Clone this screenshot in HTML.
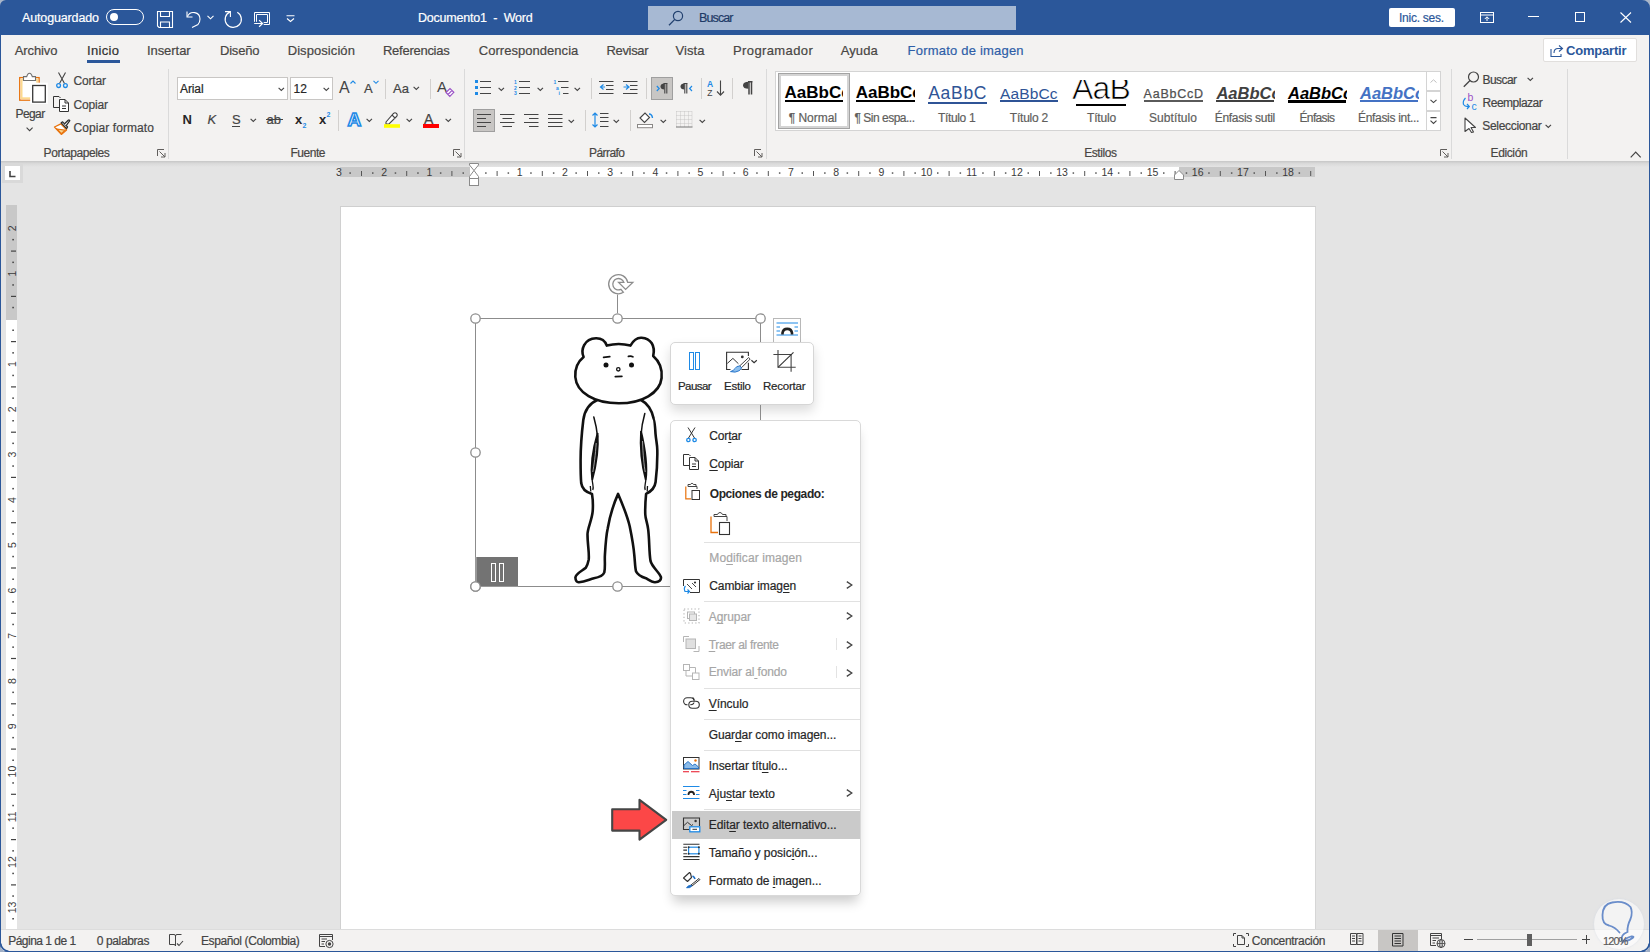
<!DOCTYPE html>
<html><head><meta charset="utf-8"><style>
html,body{margin:0;padding:0;}
body{width:1650px;height:952px;position:relative;overflow:hidden;background:#e4e4e4;font-family:"Liberation Sans",sans-serif;}
.t{position:absolute;white-space:nowrap;line-height:1;-webkit-text-stroke:0.2px currentColor;}
svg{overflow:visible;}
</style></head><body>
<div style="position:absolute;left:0px;top:0px;width:1650px;height:35px;background:#2b579a;"></div>
<div style="position:absolute;left:0px;top:35px;width:1650px;height:126px;background:#f3f2f1;"></div>
<div style="position:absolute;left:0px;top:161px;width:1650px;height:6px;background:linear-gradient(#c6c6c6,#d9d9d9 40%,#e4e4e4);"></div>
<div style="position:absolute;left:0px;top:0px;width:1px;height:952px;background:#2b579a;"></div>
<div style="position:absolute;left:1649px;top:0px;width:1px;height:952px;background:#2b579a;"></div>
<div style="position:absolute;left:0px;top:951px;width:1650px;height:1px;background:#2b579a;"></div>
<div style="position:absolute;left:1px;top:929px;width:1648px;height:22px;background:#f3f2f1;border-top:1px solid #dcdcdc;box-sizing:border-box;"></div>
<div style="position:absolute;left:340px;top:206px;width:976px;height:723px;background:#fff;border-left:1px solid #d0d0d0;border-top:1px solid #cfcfcf;border-right:1px solid #d6d6d6;box-sizing:border-box;"></div>
<div class="t" style="left:22.00px;top:12.00px;font-size:12.5px;color:#ffffff;letter-spacing:-0.140px;">Autoguardado</div>
<div style="position:absolute;left:106px;top:9px;width:38px;height:16px;border:1.3px solid #fff;border-radius:8px;box-sizing:border-box;"></div>
<div style="position:absolute;left:110px;top:13px;width:8px;height:8px;background:#fff;border-radius:50%;"></div>
<svg style="position:absolute;left:157px;top:11px;" width="17" height="17" viewBox="0 0 17 17"><path d="M0.5 0.5H15.5V16.5H2L0.5 15Z M3.5 0.5V5.5H12.5V0.5 M3.5 16.5V11H12.5V16.5" fill="none" stroke="#fff" stroke-width="1.1"/></svg>
<svg style="position:absolute;left:186px;top:10px;" width="16" height="18" viewBox="0 0 16 18"><path d="M1.5 6.5 A6.5 6.5 0 0 1 14 9 Q14 12 12 14.5 L6 17.5" fill="none" stroke="#fff" stroke-width="1.1"/><path d="M1 1.5V7H6.5" fill="none" stroke="#fff" stroke-width="1.1"/></svg>
<svg style="position:absolute;left:207px;top:15px;" width="7" height="5" viewBox="0 0 7 5"><path d="M0.5 0.8L3.5 3.8L6.5 0.8" fill="none" stroke="#fff" stroke-width="1.1"/></svg>
<svg style="position:absolute;left:224px;top:10px;" width="20" height="20" viewBox="0 0 20 20"><path d="M13.3 2.3A8.1 8.1 0 1 1 6 1.9" fill="none" stroke="#fff" stroke-width="1.2"/><path d="M1 1.6H6.4V7" fill="none" stroke="#fff" stroke-width="1.1"/></svg>
<svg style="position:absolute;left:253px;top:11px;" width="19" height="18" viewBox="0 0 19 18"><path d="M1.5 10.8V1.5H16.5V13.5H10.7 M3.5 10.8V3.5H14.5V11.5H10.7" fill="none" stroke="#fff" stroke-width="1"/><path d="M1.2 12.5H9.4 M6.1 9.1L9.6 12.5L6.1 15.8" fill="none" stroke="#fff" stroke-width="1.2"/></svg>
<svg style="position:absolute;left:286px;top:15px;" width="9" height="7" viewBox="0 0 9 7"><path d="M0.5 0.8H8.5 M1 3.5L4.5 6.5L8 3.5" fill="none" stroke="#fff" stroke-width="1.1"/></svg>
<div class="t" style="left:418.00px;top:12.00px;font-size:12.5px;color:#ffffff;letter-spacing:-0.220px;">Documento1  -  Word</div>
<div style="position:absolute;left:648px;top:6px;width:368px;height:24px;background:#a7b9d3;"></div>
<svg style="position:absolute;left:668px;top:10px;" width="16" height="16" viewBox="0 0 16 16"><circle cx="10" cy="6" r="4.6" fill="none" stroke="#22416f" stroke-width="1.2"/><path d="M6.8 9.4L1 15.2" stroke="#22416f" stroke-width="1.3"/></svg>
<div class="t" style="left:699.00px;top:12.00px;font-size:12.5px;color:#1e3a66;letter-spacing:-0.881px;">Buscar</div>
<div style="position:absolute;left:1389px;top:8px;width:66px;height:19px;background:#fff;border-radius:2px;"></div>
<div class="t" style="left:1399.00px;top:12.00px;font-size:12px;color:#2b579a;letter-spacing:-0.261px;">Inic. ses.</div>
<svg style="position:absolute;left:1480px;top:12px;" width="15" height="11" viewBox="0 0 15 11"><rect x="0.5" y="0.5" width="13" height="10" fill="none" stroke="#fff" stroke-width="1"/><path d="M0.5 3H13.5 M7 9V5 M4.8 7L7 4.8L9.2 7" fill="none" stroke="#fff" stroke-width="1"/></svg>
<div style="position:absolute;left:1528px;top:16px;width:11px;height:1px;background:#fff;"></div>
<div style="position:absolute;left:1575px;top:12px;width:10px;height:10px;border:1px solid #fff;box-sizing:border-box;"></div>
<svg style="position:absolute;left:1620px;top:12px;" width="12" height="11" viewBox="0 0 12 11"><path d="M0.5 0.5L11 10.5M11 0.5L0.5 10.5" stroke="#fff" stroke-width="1.1"/></svg>
<div class="t" style="left:14.80px;top:44.00px;font-size:13px;color:#484644;letter-spacing:-0.125px;">Archivo</div>
<div class="t" style="left:87.00px;top:44.00px;font-size:13px;color:#303030;letter-spacing:0.330px;">Inicio</div>
<div class="t" style="left:146.90px;top:44.00px;font-size:13px;color:#484644;letter-spacing:-0.039px;">Insertar</div>
<div class="t" style="left:220.00px;top:44.00px;font-size:13px;color:#484644;letter-spacing:-0.213px;">Diseño</div>
<div class="t" style="left:287.70px;top:44.00px;font-size:13px;color:#484644;letter-spacing:0.073px;">Disposición</div>
<div class="t" style="left:383.00px;top:44.00px;font-size:13px;color:#484644;letter-spacing:-0.267px;">Referencias</div>
<div class="t" style="left:478.80px;top:44.00px;font-size:13px;color:#484644;letter-spacing:0.036px;">Correspondencia</div>
<div class="t" style="left:606.40px;top:44.00px;font-size:13px;color:#484644;letter-spacing:-0.311px;">Revisar</div>
<div class="t" style="left:675.60px;top:44.00px;font-size:13px;color:#484644;letter-spacing:0.034px;">Vista</div>
<div class="t" style="left:733.00px;top:44.00px;font-size:13px;color:#484644;letter-spacing:0.384px;">Programador</div>
<div class="t" style="left:840.80px;top:44.00px;font-size:13px;color:#484644;letter-spacing:0.069px;">Ayuda</div>
<div class="t" style="left:907.60px;top:44.00px;font-size:13px;color:#2f5ea8;letter-spacing:0.205px;">Formato de imagen</div>
<div style="position:absolute;left:87px;top:60px;width:33px;height:3px;background:#2b579a;"></div>
<div style="position:absolute;left:1543px;top:38px;width:94px;height:24px;background:#fff;border:1px solid #e1dfdd;border-radius:2px;box-sizing:border-box;"></div>
<svg style="position:absolute;left:1550px;top:44px;" width="14" height="13" viewBox="0 0 14 13"><path d="M9 1.5L12.5 4.5L9 7.5 M12.5 4.5H8Q4 4.5 4 9 M1 5V12.5H11V10" fill="none" stroke="#2b579a" stroke-width="1.1"/></svg>
<div class="t" style="left:1566.00px;top:44.00px;font-size:13px;color:#2b579a;font-weight:700;-webkit-text-stroke:0;letter-spacing:-0.202px;">Compartir</div>
<div style="position:absolute;left:168px;top:69px;width:1px;height:90px;background:#dadada;"></div>
<div style="position:absolute;left:464px;top:69px;width:1px;height:90px;background:#dadada;"></div>
<div style="position:absolute;left:766px;top:69px;width:1px;height:90px;background:#dadada;"></div>
<div style="position:absolute;left:1451px;top:69px;width:1px;height:90px;background:#dadada;"></div>
<div style="position:absolute;left:1567px;top:69px;width:1px;height:90px;background:#dadada;"></div>
<svg style="position:absolute;left:157px;top:149px;" width="9" height="9" viewBox="0 0 9 9"><path d="M0.5 7V0.5H7 M2.5 2.5L8 8 M8 4V8H4" fill="none" stroke="#605e5c" stroke-width="1"/></svg>
<svg style="position:absolute;left:453px;top:149px;" width="9" height="9" viewBox="0 0 9 9"><path d="M0.5 7V0.5H7 M2.5 2.5L8 8 M8 4V8H4" fill="none" stroke="#605e5c" stroke-width="1"/></svg>
<svg style="position:absolute;left:754px;top:149px;" width="9" height="9" viewBox="0 0 9 9"><path d="M0.5 7V0.5H7 M2.5 2.5L8 8 M8 4V8H4" fill="none" stroke="#605e5c" stroke-width="1"/></svg>
<svg style="position:absolute;left:1440px;top:149px;" width="9" height="9" viewBox="0 0 9 9"><path d="M0.5 7V0.5H7 M2.5 2.5L8 8 M8 4V8H4" fill="none" stroke="#605e5c" stroke-width="1"/></svg>
<div class="t" style="left:43.60px;top:147.00px;font-size:12px;color:#484644;letter-spacing:-0.411px;">Portapapeles</div>
<div class="t" style="left:290.40px;top:147.00px;font-size:12px;color:#484644;letter-spacing:-0.452px;">Fuente</div>
<div class="t" style="left:589.00px;top:147.00px;font-size:12px;color:#484644;letter-spacing:-0.559px;">Párrafo</div>
<div class="t" style="left:1084.20px;top:147.00px;font-size:12px;color:#484644;letter-spacing:-0.424px;">Estilos</div>
<div class="t" style="left:1490.60px;top:147.00px;font-size:12px;color:#484644;letter-spacing:-0.393px;">Edición</div>
<svg style="position:absolute;left:1630px;top:151px;" width="12" height="7" viewBox="0 0 12 7"><path d="M0.7 6.3L5.7 1L10.7 6.3" fill="none" stroke="#444" stroke-width="1.2"/></svg>
<svg style="position:absolute;left:12px;top:68px;" width="40" height="40" viewBox="0 0 40 40"><rect x="7.7" y="9.6" width="19.4" height="22.6" fill="#fff" stroke="#e8720c" stroke-width="1.3"/>
<path d="M9.6 31V11.6H25.2V20" fill="none" stroke="#fcd98f" stroke-width="1.8"/><path d="M9.6 30.2H21" stroke="#fcd98f" stroke-width="1.8"/>
<path d="M11.5 12.5V8.6H14.7Q15.6 5.2 17.5 5.2Q19.4 5.2 20.3 8.6H23.5V12.5Z" fill="#fff" stroke="#707070" stroke-width="1.1"/>
<rect x="19.7" y="16.2" width="14.6" height="18.2" fill="#fff" stroke="#fff" stroke-width="3"/>
<rect x="20.7" y="17.5" width="12.6" height="16.6" fill="#fff" stroke="#383838" stroke-width="1.3"/></svg>
<div class="t" style="left:15.50px;top:108.00px;font-size:12px;color:#444444;letter-spacing:-0.581px;">Pegar</div>
<svg style="position:absolute;left:26px;top:127px;" width="8" height="5" viewBox="0 0 8 5"><path d="M0.6 0.6L3.6 3.6L6.6 0.6" fill="none" stroke="#444" stroke-width="1.1"/></svg>
<svg style="position:absolute;left:56px;top:72px;" width="12" height="17" viewBox="0 0 12 17"><path d="M2.5 0.5L8.5 11.5 M9.5 0.5L3.5 11.5" stroke="#444" stroke-width="1.1" fill="none"/>
<circle cx="2.6" cy="13.6" r="1.9" fill="none" stroke="#1e8ae6" stroke-width="1.3"/><circle cx="9.4" cy="13.6" r="1.9" fill="none" stroke="#1e8ae6" stroke-width="1.3"/></svg>
<div class="t" style="left:73.50px;top:75.00px;font-size:12px;color:#444444;letter-spacing:-0.188px;">Cortar</div>
<svg style="position:absolute;left:53px;top:96px;" width="17" height="16" viewBox="0 0 17 16"><path d="M6.5 11.5H0.5V0.5H6L7.5 2" fill="none" stroke="#333" stroke-width="1"/>
<path d="M6.5 3.5H12L15.5 7V15.5H6.5Z M12 3.5V7H15.5 M9 10H13 M9 12.5H13" fill="#fff" stroke="#333" stroke-width="1"/></svg>
<div class="t" style="left:73.50px;top:99.00px;font-size:12px;color:#444444;letter-spacing:-0.170px;">Copiar</div>
<svg style="position:absolute;left:50px;top:116px;" width="24" height="22" viewBox="0 0 24 22"><path d="M4.5,11 L10.8,7.9 L16.6,13.9 L11.3,18.4 Z" fill="#fff" stroke="#e8720c" stroke-width="1.3" stroke-linejoin="round"/>
<path d="M7,13 L15.2,14.2 L11.3,17.6 Z" fill="#f6d38f" stroke="#e8720c" stroke-width="1.1"/>
<path d="M11.2,6.8 L12.6,5.8 L17.6,11 L16.6,12.6 Z" fill="#fff" stroke="#2b2b2b" stroke-width="1.2" stroke-linejoin="round"/>
<path d="M14.3,8 L18.2,4.2 Q19.3,3.6 19.8,4.6 L16.2,9.6" fill="#fff" stroke="#2b2b2b" stroke-width="1.2" stroke-linejoin="round"/></svg>
<div class="t" style="left:73.50px;top:122.00px;font-size:12px;color:#444444;letter-spacing:0.079px;">Copiar formato</div>
<div style="position:absolute;left:177px;top:77px;width:111px;height:23px;background:#fff;border:1px solid #c8c6c4;box-sizing:border-box;"></div>
<div class="t" style="left:180.00px;top:83.00px;font-size:12px;color:#262626;letter-spacing:-0.102px;">Arial</div>
<svg style="position:absolute;left:278px;top:87px;" width="7" height="5" viewBox="0 0 7 5"><path d="M0.6 0.8L3.3 3.5L6 0.8" fill="none" stroke="#444" stroke-width="1.1"/></svg>
<div style="position:absolute;left:290px;top:77px;width:43px;height:23px;background:#fff;border:1px solid #c8c6c4;box-sizing:border-box;"></div>
<div class="t" style="left:293.60px;top:83.00px;font-size:12px;color:#262626;">12</div>
<svg style="position:absolute;left:323px;top:87px;" width="7" height="5" viewBox="0 0 7 5"><path d="M0.6 0.8L3.3 3.5L6 0.8" fill="none" stroke="#444" stroke-width="1.1"/></svg>
<div class="t" style="left:339.00px;top:80.00px;font-size:16px;color:#444;-webkit-text-stroke:0;">A</div>
<svg style="position:absolute;left:350px;top:80px;" width="6" height="4" viewBox="0 0 6 4"><path d="M0.5 3.5L3 1L5.5 3.5" fill="none" stroke="#1e8ae6" stroke-width="1.1"/></svg>
<div class="t" style="left:364.00px;top:82.00px;font-size:13px;color:#444;">A</div>
<svg style="position:absolute;left:373px;top:80px;" width="6" height="4" viewBox="0 0 6 4"><path d="M0.5 0.8L3 3.3L5.5 0.8" fill="none" stroke="#1e8ae6" stroke-width="1.1"/></svg>
<div style="position:absolute;left:385px;top:79px;width:1px;height:20px;background:#d2d0ce;"></div>
<div class="t" style="left:393.00px;top:82.00px;font-size:13px;color:#444;letter-spacing:0.099px;">Aa</div>
<svg style="position:absolute;left:413px;top:86px;" width="7" height="5" viewBox="0 0 7 5"><path d="M0.6 0.8L3.3 3.5L6 0.8" fill="none" stroke="#444" stroke-width="1.1"/></svg>
<div style="position:absolute;left:430px;top:79px;width:1px;height:20px;background:#d2d0ce;"></div>
<div class="t" style="left:437.00px;top:79.00px;font-size:15px;color:#444;-webkit-text-stroke:0;">A</div>
<svg style="position:absolute;left:445px;top:87px;" width="10" height="10" viewBox="0 0 10 10"><path d="M1 5.5L5 1.5L8.8 5.3L4.8 9.3Z M3 7.5L6.8 3.7" fill="#fff" stroke="#9a52c6" stroke-width="1.2"/></svg>
<div class="t" style="left:182.40px;top:113.00px;font-size:13px;color:#262626;font-weight:700;-webkit-text-stroke:0;">N</div>
<div class="t" style="left:207.50px;top:113.00px;font-size:13px;color:#444;font-style:italic;">K</div>
<div class="t" style="left:232.00px;top:113.00px;font-size:13px;color:#444;">S</div>
<div style="position:absolute;left:232px;top:126px;width:8px;height:1px;background:#444;"></div>
<svg style="position:absolute;left:250px;top:118px;" width="7" height="5" viewBox="0 0 7 5"><path d="M0.6 0.8L3.3 3.5L6 0.8" fill="none" stroke="#444" stroke-width="1.1"/></svg>
<div class="t" style="left:266.50px;top:113.00px;font-size:13px;color:#444;">ab</div>
<div style="position:absolute;left:266px;top:119px;width:17px;height:1px;background:#444;"></div>
<div class="t" style="left:295.00px;top:113.00px;font-size:13px;color:#262626;font-weight:700;-webkit-text-stroke:0;">x</div>
<div class="t" style="left:302.50px;top:122.00px;font-size:7px;color:#1e8ae6;font-weight:700;-webkit-text-stroke:0;">2</div>
<div class="t" style="left:319.00px;top:113.00px;font-size:13px;color:#262626;font-weight:700;-webkit-text-stroke:0;">x</div>
<div class="t" style="left:326.50px;top:111.00px;font-size:7px;color:#1e8ae6;font-weight:700;-webkit-text-stroke:0;">2</div>
<div style="position:absolute;left:338px;top:110px;width:1px;height:21px;background:#d2d0ce;"></div>
<svg style="position:absolute;left:346.5px;top:110px;" width="18" height="17" viewBox="0 0 18 17"><text x="0.5" y="15.5" font-family="Liberation Sans" font-weight="700" font-size="19" fill="#fff" stroke="#1e8ae6" stroke-width="1.6">A</text></svg>
<svg style="position:absolute;left:366px;top:118px;" width="7" height="5" viewBox="0 0 7 5"><path d="M0.6 0.8L3.3 3.5L6 0.8" fill="none" stroke="#444" stroke-width="1.1"/></svg>
<svg style="position:absolute;left:383px;top:111px;" width="18" height="18" viewBox="0 0 18 18"><path d="M3 11L10.5 2.5Q12 1 13.5 2.5Q15 4 13.5 5.5L6 13L3 13Z M9 4L12 7" fill="#fff" stroke="#444" stroke-width="1.1"/><rect x="1" y="13.2" width="16" height="3.6" fill="#ffff00"/></svg>
<svg style="position:absolute;left:406px;top:118px;" width="7" height="5" viewBox="0 0 7 5"><path d="M0.6 0.8L3.3 3.5L6 0.8" fill="none" stroke="#444" stroke-width="1.1"/></svg>
<div class="t" style="left:424.00px;top:112.00px;font-size:14px;color:#444;">A</div>
<div style="position:absolute;left:423px;top:124px;width:16px;height:4px;background:#ff0000;"></div>
<svg style="position:absolute;left:445px;top:118px;" width="7" height="5" viewBox="0 0 7 5"><path d="M0.6 0.8L3.3 3.5L6 0.8" fill="none" stroke="#444" stroke-width="1.1"/></svg>
<svg style="position:absolute;left:475px;top:80px;" width="17" height="15" viewBox="0 0 17 15"><rect x="0" y="0" width="3" height="3" fill="#1e8ae6"/><rect x="0" y="6" width="3" height="3" fill="#1e8ae6"/><rect x="0" y="12" width="3" height="3" fill="#1e8ae6"/><path d="M5 1.5H16 M5 7.5H16 M5 13.5H16" stroke="#444" stroke-width="1.1"/></svg>
<svg style="position:absolute;left:498px;top:87px;" width="7" height="5" viewBox="0 0 7 5"><path d="M0.6 0.8L3.3 3.5L6 0.8" fill="none" stroke="#444" stroke-width="1.1"/></svg>
<svg style="position:absolute;left:514px;top:80px;" width="17" height="16" viewBox="0 0 17 16"><text x="0" y="4" font-size="5" font-family="Liberation Sans" font-weight="700" fill="#1e8ae6">1</text><text x="0" y="9.5" font-size="5" font-family="Liberation Sans" font-weight="700" fill="#1e8ae6">2</text><text x="0" y="15" font-size="5" font-family="Liberation Sans" font-weight="700" fill="#1e8ae6">3</text><path d="M5 1.5H16 M5 7.5H16 M5 13.5H16" stroke="#444" stroke-width="1.1"/></svg>
<svg style="position:absolute;left:537px;top:87px;" width="7" height="5" viewBox="0 0 7 5"><path d="M0.6 0.8L3.3 3.5L6 0.8" fill="none" stroke="#444" stroke-width="1.1"/></svg>
<svg style="position:absolute;left:553px;top:80px;" width="17" height="16" viewBox="0 0 17 16"><text x="0.5" y="4" font-size="5" font-family="Liberation Sans" font-weight="700" fill="#1e8ae6">1</text><text x="3" y="9.5" font-size="5" font-family="Liberation Sans" font-weight="700" fill="#1e8ae6">a</text><text x="5.5" y="15" font-size="5" font-family="Liberation Sans" font-weight="700" fill="#1e8ae6">i</text><path d="M5 1.5H15.5 M8 7.5H15.5 M10 13.5H15.5" stroke="#444" stroke-width="1.1"/></svg>
<svg style="position:absolute;left:574px;top:87px;" width="7" height="5" viewBox="0 0 7 5"><path d="M0.6 0.8L3.3 3.5L6 0.8" fill="none" stroke="#444" stroke-width="1.1"/></svg>
<div style="position:absolute;left:591px;top:78px;width:1px;height:21px;background:#d2d0ce;"></div>
<svg style="position:absolute;left:599px;top:80px;" width="15" height="15" viewBox="0 0 15 15"><path d="M0 1.5H14.5 M7 5.5H14.5 M7 9.5H14.5 M0 13.5H14.5" stroke="#444" stroke-width="1.1"/><path d="M4.5 4.5L1.5 7L4.5 9.5 M1.5 7H6" fill="none" stroke="#1e8ae6" stroke-width="1.2"/></svg>
<svg style="position:absolute;left:623px;top:80px;" width="15" height="15" viewBox="0 0 15 15"><path d="M0 1.5H14.5 M7 5.5H14.5 M7 9.5H14.5 M0 13.5H14.5" stroke="#444" stroke-width="1.1"/><path d="M3 4.5L6 7L3 9.5 M0.5 7H6" fill="none" stroke="#1e8ae6" stroke-width="1.2"/></svg>
<div style="position:absolute;left:646px;top:78px;width:1px;height:21px;background:#d2d0ce;"></div>
<div style="position:absolute;left:651px;top:77px;width:22px;height:23px;background:#c8c6c4;border:1px solid #9f9f9f;box-sizing:border-box;"></div>
<svg style="position:absolute;left:656px;top:83px;" width="12" height="11" viewBox="0 0 12 11"><path d="M0.8 3L3.2 5.5L0.8 8" fill="none" stroke="#1e8ae6" stroke-width="1.2"/><path d="M7.5 0.5H11.5 M8.8 0.5V10.5 M10.8 0.5V10.5" stroke="#444" stroke-width="1.1"/><path d="M8.5 0.5Q4.5 0.5 4.5 3.5Q4.5 6.5 8.5 6.5Z" fill="#444"/></svg>
<svg style="position:absolute;left:679px;top:83px;" width="14" height="11" viewBox="0 0 14 11"><path d="M4.5 0.5H8.5 M5.8 0.5V10.5 M7.8 0.5V10.5" stroke="#444" stroke-width="1.1"/><path d="M5.5 0.5Q1.5 0.5 1.5 3.5Q1.5 6.5 5.5 6.5Z" fill="#444"/><path d="M13 3L10.6 5.5L13 8" fill="none" stroke="#1e8ae6" stroke-width="1.2"/></svg>
<div style="position:absolute;left:701px;top:78px;width:1px;height:21px;background:#d2d0ce;"></div>
<svg style="position:absolute;left:707px;top:80px;" width="19" height="17" viewBox="0 0 19 17"><text x="0" y="7.3" font-size="8.5" font-family="Liberation Sans" font-weight="700" fill="#1e8ae6">A</text><text x="0.3" y="16" font-size="8.5" font-family="Liberation Sans" fill="#444">Z</text><path d="M13.5 0.5V15 M10 11.5L13.5 15.2L17 11.5" fill="none" stroke="#444" stroke-width="1.1"/></svg>
<div style="position:absolute;left:732px;top:78px;width:1px;height:21px;background:#d2d0ce;"></div>
<svg style="position:absolute;left:742px;top:81px;" width="11" height="14" viewBox="0 0 11 14"><path d="M6 0.8H10.5 M7 0.8V13.5 M9.5 0.8V13.5" stroke="#444" stroke-width="1.5"/><path d="M6.5 0.8Q1 0.8 1 4.3Q1 7.8 6.5 7.8Z" fill="#444"/></svg>
<div style="position:absolute;left:473px;top:109px;width:22px;height:23px;background:#c8c6c4;border:1px solid #9f9f9f;box-sizing:border-box;"></div>
<svg style="position:absolute;left:477px;top:114px;" width="15" height="14" viewBox="0 0 15 14"><path d="M0 0.5H14 M0 4.5H9 M0 8.5H14 M0 12.5H9" stroke="#444" stroke-width="1.1"/></svg>
<svg style="position:absolute;left:500px;top:114px;" width="15" height="14" viewBox="0 0 15 14"><path d="M0 0.5H14.5 M2.5 4.5H12 M0 8.5H14.5 M2.5 12.5H12" stroke="#444" stroke-width="1.1"/></svg>
<svg style="position:absolute;left:524px;top:114px;" width="15" height="14" viewBox="0 0 15 14"><path d="M0 0.5H14.5 M5 4.5H14.5 M0 8.5H14.5 M5 12.5H14.5" stroke="#444" stroke-width="1.1"/></svg>
<svg style="position:absolute;left:548px;top:114px;" width="15" height="14" viewBox="0 0 15 14"><path d="M0 0.5H14.5 M0 4.5H14.5 M0 8.5H14.5 M0 12.5H14.5" stroke="#444" stroke-width="1.1"/></svg>
<svg style="position:absolute;left:568px;top:119px;" width="7" height="5" viewBox="0 0 7 5"><path d="M0.6 0.8L3.3 3.5L6 0.8" fill="none" stroke="#444" stroke-width="1.1"/></svg>
<div style="position:absolute;left:585px;top:110px;width:1px;height:21px;background:#d2d0ce;"></div>
<svg style="position:absolute;left:592px;top:112px;" width="17" height="16" viewBox="0 0 17 16"><path d="M3 1V15 M0.5 3.5L3 1L5.5 3.5 M0.5 12.5L3 15L5.5 12.5" fill="none" stroke="#1e8ae6" stroke-width="1.2"/><path d="M8 1.5H16.5 M8 5.5H16.5 M8 9.5H16.5 M8 14.5H16.5" stroke="#444" stroke-width="1.1"/></svg>
<svg style="position:absolute;left:613px;top:119px;" width="7" height="5" viewBox="0 0 7 5"><path d="M0.6 0.8L3.3 3.5L6 0.8" fill="none" stroke="#444" stroke-width="1.1"/></svg>
<div style="position:absolute;left:630px;top:110px;width:1px;height:21px;background:#d2d0ce;"></div>
<svg style="position:absolute;left:637px;top:111px;" width="18" height="18" viewBox="0 0 18 18"><path d="M3 7L8 2L12.5 6.5L7.5 11.5Z" fill="#fff" stroke="#444" stroke-width="1.1"/><path d="M12 3Q15 3 15.5 7" fill="none" stroke="#1e8ae6" stroke-width="1.4"/><rect x="0.5" y="13.5" width="15" height="3.2" fill="#fff" stroke="#8a8886" stroke-width="1"/></svg>
<svg style="position:absolute;left:660px;top:119px;" width="7" height="5" viewBox="0 0 7 5"><path d="M0.6 0.8L3.3 3.5L6 0.8" fill="none" stroke="#444" stroke-width="1.1"/></svg>
<svg style="position:absolute;left:676px;top:111px;" width="17" height="17" viewBox="0 0 17 17"><path d="M0.5 0.5H16 M0.5 4.5H16 M0.5 8.5H16 M0.5 12.5H16 M0.5 0.5V16 M4.5 0.5V16 M8.5 0.5V16 M12.5 0.5V16 M16 0.5V16" fill="none" stroke="#bdbdbd" stroke-width="0.8" stroke-dasharray="1 1"/><path d="M0 16H16.5" stroke="#777" stroke-width="1"/></svg>
<svg style="position:absolute;left:699px;top:119px;" width="7" height="5" viewBox="0 0 7 5"><path d="M0.6 0.8L3.3 3.5L6 0.8" fill="none" stroke="#444" stroke-width="1.1"/></svg>
<div style="position:absolute;left:775px;top:71px;width:652px;height:60px;background:#fff;border:1px solid #d4d4d4;box-sizing:border-box;"></div>
<div style="position:absolute;left:778px;top:73px;width:72px;height:56px;border:1px solid #a3a3a3;box-sizing:border-box;"></div>
<div style="position:absolute;left:779px;top:74px;width:70px;height:54px;border:2.5px solid #d4d4d4;box-sizing:border-box;"></div>
<div style="position:absolute;left:784px;top:78px;width:59px;height:26px;overflow:hidden;">
<div class="t" style="left:0.60px;top:6.00px;font-size:17px;color:#000;font-weight:700;-webkit-text-stroke:0;">AaBbCc</div>
</div>
<div style="position:absolute;left:785px;top:100px;width:58px;height:2.4px;background:#000;"></div>
<div class="t" style="left:788.70px;top:112.00px;font-size:12px;color:#605e5c;letter-spacing:-0.022px;">¶ Normal</div>
<div style="position:absolute;left:855px;top:78px;width:60px;height:26px;overflow:hidden;">
<div class="t" style="left:0.70px;top:6.00px;font-size:17px;color:#000;font-weight:700;-webkit-text-stroke:0;">AaBbCc</div>
</div>
<div style="position:absolute;left:856px;top:100px;width:59px;height:2.4px;background:#000;"></div>
<div class="t" style="left:854.60px;top:112.00px;font-size:12px;color:#605e5c;letter-spacing:-0.507px;">¶ Sin espa...</div>
<div class="t" style="left:928.20px;top:85.00px;font-size:17.5px;color:#2f5496;-webkit-text-stroke:0;letter-spacing:0.713px;">AaBbC</div>
<div style="position:absolute;left:928px;top:101.5px;width:59px;height:2px;background:#2f5496;"></div>
<div class="t" style="left:938.00px;top:112.00px;font-size:12px;color:#605e5c;letter-spacing:-0.346px;">Título 1</div>
<div class="t" style="left:1000.00px;top:86.00px;font-size:15.5px;color:#2f5496;-webkit-text-stroke:0;letter-spacing:0.148px;">AaBbCc</div>
<div style="position:absolute;left:1000px;top:100.4px;width:58px;height:2px;background:#2f5496;"></div>
<div class="t" style="left:1009.80px;top:112.00px;font-size:12px;color:#605e5c;letter-spacing:-0.218px;">Título 2</div>
<div style="position:absolute;left:1070px;top:80px;width:64px;height:24px;overflow:hidden;">
<div class="t" style="left:2.00px;top:-8.00px;font-size:32px;color:#000;-webkit-text-stroke:0;letter-spacing:-0.8px;-webkit-text-stroke:0.7px #fff;">AaB</div>
</div>
<div style="position:absolute;left:1076.3px;top:104px;width:50px;height:2px;background:#000;"></div>
<div class="t" style="left:1087.00px;top:112.00px;font-size:12px;color:#605e5c;letter-spacing:-0.163px;">Título</div>
<div class="t" style="left:1143.60px;top:88.00px;font-size:12.5px;color:#505050;letter-spacing:0.753px;-webkit-text-stroke:0.25px #505050;">AaBbCcD</div>
<div style="position:absolute;left:1143.6px;top:100px;width:59.5px;height:1.8px;background:#5a5a5a;"></div>
<div class="t" style="left:1149.00px;top:112.00px;font-size:12px;color:#605e5c;letter-spacing:0.079px;">Subtítulo</div>
<div style="position:absolute;left:1214px;top:82px;width:61px;height:22px;overflow:hidden;">
<div class="t" style="left:2.40px;top:3.00px;font-size:16.5px;color:#404040;font-weight:700;-webkit-text-stroke:0;font-style:italic;">AaBbCc</div>
</div>
<div style="position:absolute;left:1216.4px;top:100.4px;width:58px;height:2px;background:#404040;"></div>
<div class="t" style="left:1214.70px;top:112.00px;font-size:12px;color:#605e5c;letter-spacing:-0.286px;">Énfasis sutil</div>
<div style="position:absolute;left:1286px;top:82px;width:61px;height:22px;overflow:hidden;">
<div class="t" style="left:2.00px;top:3.00px;font-size:16.5px;color:#000;font-weight:700;-webkit-text-stroke:0;font-style:italic;">AaBbCc</div>
</div>
<div style="position:absolute;left:1288px;top:100.4px;width:58px;height:2.2px;background:#000;"></div>
<div class="t" style="left:1299.50px;top:112.00px;font-size:12px;color:#605e5c;letter-spacing:-0.642px;">Énfasis</div>
<div style="position:absolute;left:1358px;top:82px;width:61px;height:22px;overflow:hidden;">
<div class="t" style="left:2.00px;top:3.00px;font-size:16.5px;color:#4472c4;font-weight:700;-webkit-text-stroke:0;font-style:italic;">AaBbCc</div>
</div>
<div style="position:absolute;left:1360px;top:100.4px;width:58px;height:2px;background:#4472c4;"></div>
<div class="t" style="left:1358.00px;top:112.00px;font-size:12px;color:#605e5c;letter-spacing:-0.313px;">Énfasis int...</div>
<div style="position:absolute;left:1426px;top:71px;width:15px;height:20px;background:#fff;border:1px solid #d4d4d4;box-sizing:border-box;"></div>
<div style="position:absolute;left:1426px;top:91px;width:15px;height:20px;background:#fff;border:1px solid #d4d4d4;box-sizing:border-box;"></div>
<div style="position:absolute;left:1426px;top:111px;width:15px;height:20px;background:#fff;border:1px solid #d4d4d4;box-sizing:border-box;"></div>
<svg style="position:absolute;left:1430px;top:79px;" width="7" height="4" viewBox="0 0 7 4"><path d="M0.5 3.5L3.5 0.8L6.5 3.5" fill="none" stroke="#c0c0c0" stroke-width="1"/></svg>
<svg style="position:absolute;left:1430px;top:99px;" width="7" height="5" viewBox="0 0 7 5"><path d="M0.5 0.8L3.5 3.6L6.5 0.8" fill="none" stroke="#444" stroke-width="1.1"/></svg>
<svg style="position:absolute;left:1430px;top:117px;" width="7" height="8" viewBox="0 0 7 8"><path d="M0.5 0.6H6.5 M0.5 3.6L3.5 6.4L6.5 3.6" fill="none" stroke="#444" stroke-width="1.1"/></svg>
<svg style="position:absolute;left:1463px;top:71px;" width="17" height="17" viewBox="0 0 17 17"><circle cx="10.5" cy="6" r="5" fill="none" stroke="#444" stroke-width="1.2"/><path d="M7 9.5L0.8 15.7" stroke="#444" stroke-width="1.3"/></svg>
<div class="t" style="left:1482.60px;top:74.00px;font-size:12px;color:#444444;letter-spacing:-0.590px;">Buscar</div>
<svg style="position:absolute;left:1527px;top:77px;" width="7" height="5" viewBox="0 0 7 5"><path d="M0.6 0.8L3.3 3.5L6 0.8" fill="none" stroke="#444" stroke-width="1.1"/></svg>
<svg style="position:absolute;left:1462px;top:94px;" width="17" height="17" viewBox="0 0 17 17"><text x="5.5" y="7" font-size="10.5" font-family="Liberation Sans" fill="#9a52c6">b</text><text x="9.5" y="15.5" font-size="10.5" font-family="Liberation Sans" fill="#1e8ae6">c</text><path d="M3.5 4Q0.5 7 1.5 10.5Q3 13 7 12.5 M5 10L7.3 12.5L5 15" fill="none" stroke="#1e8ae6" stroke-width="1.2"/></svg>
<div class="t" style="left:1482.60px;top:97.00px;font-size:12px;color:#444444;letter-spacing:-0.500px;">Reemplazar</div>
<svg style="position:absolute;left:1464px;top:117px;" width="13" height="16" viewBox="0 0 13 16"><path d="M1 1L11.5 10.5H7L9.5 15L7.5 15.5L5 11.5L1 14.5Z" fill="#fff" stroke="#444" stroke-width="1.1" stroke-linejoin="round"/></svg>
<div class="t" style="left:1482.30px;top:120.00px;font-size:12px;color:#444444;letter-spacing:-0.320px;">Seleccionar</div>
<svg style="position:absolute;left:1545px;top:124px;" width="7" height="5" viewBox="0 0 7 5"><path d="M0.6 0.8L3.3 3.5L6 0.8" fill="none" stroke="#444" stroke-width="1.1"/></svg>
<div style="position:absolute;left:2px;top:163px;width:21px;height:20px;background:#d9d9d9;"></div>
<div style="position:absolute;left:5px;top:166px;width:15px;height:14px;background:#fff;"></div>
<svg style="position:absolute;left:9px;top:171px;" width="7" height="7" viewBox="0 0 7 7"><path d="M1 0V5.5H6.5" fill="none" stroke="#444" stroke-width="1.6"/></svg>
<div style="position:absolute;left:340px;top:167px;width:130px;height:10px;background:#c8c8c8;"></div>
<div style="position:absolute;left:470px;top:167px;width:709px;height:10px;background:#fff;"></div>
<div style="position:absolute;left:1179px;top:167px;width:136px;height:10px;background:#c8c8c8;"></div>
<svg style="position:absolute;left:0px;top:0px;" width="1650" height="200" viewBox="0 0 1650 200"><text x="338.9" y="175.8" text-anchor="middle" font-size="10.5" font-family="Liberation Sans" fill="#3a3a3a">3</text><rect x="349.4" y="172.3" width="1.5" height="1.5" fill="#555"/><rect x="361.0" y="171" width="1" height="5" fill="#555"/><rect x="372.0" y="172.3" width="1.5" height="1.5" fill="#555"/><text x="384.1" y="175.8" text-anchor="middle" font-size="10.5" font-family="Liberation Sans" fill="#3a3a3a">2</text><rect x="394.7" y="172.3" width="1.5" height="1.5" fill="#555"/><rect x="406.2" y="171" width="1" height="5" fill="#555"/><rect x="417.2" y="172.3" width="1.5" height="1.5" fill="#555"/><text x="429.3" y="175.8" text-anchor="middle" font-size="10.5" font-family="Liberation Sans" fill="#3a3a3a">1</text><rect x="439.9" y="172.3" width="1.5" height="1.5" fill="#555"/><rect x="451.4" y="171" width="1" height="5" fill="#555"/><rect x="462.5" y="172.3" width="1.5" height="1.5" fill="#555"/><rect x="485.1" y="172.3" width="1.5" height="1.5" fill="#555"/><rect x="496.6" y="171" width="1" height="5" fill="#555"/><rect x="507.6" y="172.3" width="1.5" height="1.5" fill="#555"/><text x="519.7" y="175.8" text-anchor="middle" font-size="10.5" font-family="Liberation Sans" fill="#3a3a3a">1</text><rect x="530.2" y="172.3" width="1.5" height="1.5" fill="#555"/><rect x="541.8" y="171" width="1" height="5" fill="#555"/><rect x="552.9" y="172.3" width="1.5" height="1.5" fill="#555"/><text x="564.9" y="175.8" text-anchor="middle" font-size="10.5" font-family="Liberation Sans" fill="#3a3a3a">2</text><rect x="575.4" y="172.3" width="1.5" height="1.5" fill="#555"/><rect x="587.0" y="171" width="1" height="5" fill="#555"/><rect x="598.0" y="172.3" width="1.5" height="1.5" fill="#555"/><text x="610.1" y="175.8" text-anchor="middle" font-size="10.5" font-family="Liberation Sans" fill="#3a3a3a">3</text><rect x="620.6" y="172.3" width="1.5" height="1.5" fill="#555"/><rect x="632.2" y="171" width="1" height="5" fill="#555"/><rect x="643.2" y="172.3" width="1.5" height="1.5" fill="#555"/><text x="655.3" y="175.8" text-anchor="middle" font-size="10.5" font-family="Liberation Sans" fill="#3a3a3a">4</text><rect x="665.8" y="172.3" width="1.5" height="1.5" fill="#555"/><rect x="677.4" y="171" width="1" height="5" fill="#555"/><rect x="688.4" y="172.3" width="1.5" height="1.5" fill="#555"/><text x="700.5" y="175.8" text-anchor="middle" font-size="10.5" font-family="Liberation Sans" fill="#3a3a3a">5</text><rect x="711.0" y="172.3" width="1.5" height="1.5" fill="#555"/><rect x="722.6" y="171" width="1" height="5" fill="#555"/><rect x="733.6" y="172.3" width="1.5" height="1.5" fill="#555"/><text x="745.7" y="175.8" text-anchor="middle" font-size="10.5" font-family="Liberation Sans" fill="#3a3a3a">6</text><rect x="756.2" y="172.3" width="1.5" height="1.5" fill="#555"/><rect x="767.8" y="171" width="1" height="5" fill="#555"/><rect x="778.9" y="172.3" width="1.5" height="1.5" fill="#555"/><text x="790.9" y="175.8" text-anchor="middle" font-size="10.5" font-family="Liberation Sans" fill="#3a3a3a">7</text><rect x="801.5" y="172.3" width="1.5" height="1.5" fill="#555"/><rect x="813.0" y="171" width="1" height="5" fill="#555"/><rect x="824.1" y="172.3" width="1.5" height="1.5" fill="#555"/><text x="836.1" y="175.8" text-anchor="middle" font-size="10.5" font-family="Liberation Sans" fill="#3a3a3a">8</text><rect x="846.6" y="172.3" width="1.5" height="1.5" fill="#555"/><rect x="858.2" y="171" width="1" height="5" fill="#555"/><rect x="869.2" y="172.3" width="1.5" height="1.5" fill="#555"/><text x="881.3" y="175.8" text-anchor="middle" font-size="10.5" font-family="Liberation Sans" fill="#3a3a3a">9</text><rect x="891.8" y="172.3" width="1.5" height="1.5" fill="#555"/><rect x="903.4" y="171" width="1" height="5" fill="#555"/><rect x="914.4" y="172.3" width="1.5" height="1.5" fill="#555"/><text x="926.5" y="175.8" text-anchor="middle" font-size="10.5" font-family="Liberation Sans" fill="#3a3a3a">10</text><rect x="937.0" y="172.3" width="1.5" height="1.5" fill="#555"/><rect x="948.6" y="171" width="1" height="5" fill="#555"/><rect x="959.6" y="172.3" width="1.5" height="1.5" fill="#555"/><text x="971.7" y="175.8" text-anchor="middle" font-size="10.5" font-family="Liberation Sans" fill="#3a3a3a">11</text><rect x="982.2" y="172.3" width="1.5" height="1.5" fill="#555"/><rect x="993.8" y="171" width="1" height="5" fill="#555"/><rect x="1004.9" y="172.3" width="1.5" height="1.5" fill="#555"/><text x="1016.9" y="175.8" text-anchor="middle" font-size="10.5" font-family="Liberation Sans" fill="#3a3a3a">12</text><rect x="1027.5" y="172.3" width="1.5" height="1.5" fill="#555"/><rect x="1039.0" y="171" width="1" height="5" fill="#555"/><rect x="1050.1" y="172.3" width="1.5" height="1.5" fill="#555"/><text x="1062.1" y="175.8" text-anchor="middle" font-size="10.5" font-family="Liberation Sans" fill="#3a3a3a">13</text><rect x="1072.6" y="172.3" width="1.5" height="1.5" fill="#555"/><rect x="1084.2" y="171" width="1" height="5" fill="#555"/><rect x="1095.2" y="172.3" width="1.5" height="1.5" fill="#555"/><text x="1107.3" y="175.8" text-anchor="middle" font-size="10.5" font-family="Liberation Sans" fill="#3a3a3a">14</text><rect x="1117.9" y="172.3" width="1.5" height="1.5" fill="#555"/><rect x="1129.4" y="171" width="1" height="5" fill="#555"/><rect x="1140.5" y="172.3" width="1.5" height="1.5" fill="#555"/><text x="1152.5" y="175.8" text-anchor="middle" font-size="10.5" font-family="Liberation Sans" fill="#3a3a3a">15</text><rect x="1163.0" y="172.3" width="1.5" height="1.5" fill="#555"/><rect x="1174.6" y="171" width="1" height="5" fill="#555"/><rect x="1185.7" y="172.3" width="1.5" height="1.5" fill="#555"/><text x="1197.7" y="175.8" text-anchor="middle" font-size="10.5" font-family="Liberation Sans" fill="#3a3a3a">16</text><rect x="1208.2" y="172.3" width="1.5" height="1.5" fill="#555"/><rect x="1219.8" y="171" width="1" height="5" fill="#555"/><rect x="1230.9" y="172.3" width="1.5" height="1.5" fill="#555"/><text x="1242.9" y="175.8" text-anchor="middle" font-size="10.5" font-family="Liberation Sans" fill="#3a3a3a">17</text><rect x="1253.5" y="172.3" width="1.5" height="1.5" fill="#555"/><rect x="1265.0" y="171" width="1" height="5" fill="#555"/><rect x="1276.1" y="172.3" width="1.5" height="1.5" fill="#555"/><text x="1288.1" y="175.8" text-anchor="middle" font-size="10.5" font-family="Liberation Sans" fill="#3a3a3a">18</text><rect x="1298.6" y="172.3" width="1.5" height="1.5" fill="#555"/><rect x="1310.2" y="171" width="1" height="5" fill="#555"/></svg>
<svg style="position:absolute;left:469px;top:163px;" width="11" height="24" viewBox="0 0 11 24"><path d="M0.5 0.5H9.5V2L5 7.5L0.5 2Z M0.5 13.5L5 7.5L9.5 13.5V15.5H0.5Z" fill="#fff" stroke="#8a8a8a" stroke-width="1"/><rect x="0.5" y="15.5" width="9" height="7" fill="#fff" stroke="#8a8a8a" stroke-width="1"/></svg>
<svg style="position:absolute;left:1174px;top:170px;" width="11" height="11" viewBox="0 0 11 11"><path d="M0.5 9.5V5L5 0.5L9.5 5V9.5Z" fill="#fff" stroke="#8a8a8a" stroke-width="1"/></svg>
<div style="position:absolute;left:6px;top:205px;width:11px;height:115px;background:#c8c8c8;"></div>
<div style="position:absolute;left:6px;top:320px;width:11px;height:609px;background:#fff;"></div>
<svg style="position:absolute;left:0px;top:0px;" width="30" height="952" viewBox="0 0 30 952"><text transform="translate(16 228.4) rotate(-90)" text-anchor="middle" font-size="10.5" font-family="Liberation Sans" fill="#3a3a3a">2</text><rect x="12.3" y="238.9" width="1.6" height="1.5" fill="#444"/><rect x="11" y="250.5" width="5" height="1.2" fill="#444"/><rect x="12.3" y="261.6" width="1.6" height="1.5" fill="#444"/><text transform="translate(16 273.6) rotate(-90)" text-anchor="middle" font-size="10.5" font-family="Liberation Sans" fill="#3a3a3a">1</text><rect x="12.3" y="284.2" width="1.6" height="1.5" fill="#444"/><rect x="11" y="295.8" width="5" height="1.2" fill="#444"/><rect x="12.3" y="306.8" width="1.6" height="1.5" fill="#444"/><rect x="12.3" y="329.5" width="1.6" height="1.5" fill="#444"/><rect x="11" y="341.0" width="5" height="1.2" fill="#444"/><rect x="12.3" y="352.1" width="1.6" height="1.5" fill="#444"/><text transform="translate(16 364.2) rotate(-90)" text-anchor="middle" font-size="10.5" font-family="Liberation Sans" fill="#3a3a3a">1</text><rect x="12.3" y="374.7" width="1.6" height="1.5" fill="#444"/><rect x="11" y="386.3" width="5" height="1.2" fill="#444"/><rect x="12.3" y="397.4" width="1.6" height="1.5" fill="#444"/><text transform="translate(16 409.4) rotate(-90)" text-anchor="middle" font-size="10.5" font-family="Liberation Sans" fill="#3a3a3a">2</text><rect x="12.3" y="420.0" width="1.6" height="1.5" fill="#444"/><rect x="11" y="431.6" width="5" height="1.2" fill="#444"/><rect x="12.3" y="442.6" width="1.6" height="1.5" fill="#444"/><text transform="translate(16 454.7) rotate(-90)" text-anchor="middle" font-size="10.5" font-family="Liberation Sans" fill="#3a3a3a">3</text><rect x="12.3" y="465.3" width="1.6" height="1.5" fill="#444"/><rect x="11" y="476.8" width="5" height="1.2" fill="#444"/><rect x="12.3" y="487.9" width="1.6" height="1.5" fill="#444"/><text transform="translate(16 500.0) rotate(-90)" text-anchor="middle" font-size="10.5" font-family="Liberation Sans" fill="#3a3a3a">4</text><rect x="12.3" y="510.5" width="1.6" height="1.5" fill="#444"/><rect x="11" y="522.1" width="5" height="1.2" fill="#444"/><rect x="12.3" y="533.2" width="1.6" height="1.5" fill="#444"/><text transform="translate(16 545.2) rotate(-90)" text-anchor="middle" font-size="10.5" font-family="Liberation Sans" fill="#3a3a3a">5</text><rect x="12.3" y="555.8" width="1.6" height="1.5" fill="#444"/><rect x="11" y="567.4" width="5" height="1.2" fill="#444"/><rect x="12.3" y="578.5" width="1.6" height="1.5" fill="#444"/><text transform="translate(16 590.5) rotate(-90)" text-anchor="middle" font-size="10.5" font-family="Liberation Sans" fill="#3a3a3a">6</text><rect x="12.3" y="601.1" width="1.6" height="1.5" fill="#444"/><rect x="11" y="612.7" width="5" height="1.2" fill="#444"/><rect x="12.3" y="623.7" width="1.6" height="1.5" fill="#444"/><text transform="translate(16 635.8) rotate(-90)" text-anchor="middle" font-size="10.5" font-family="Liberation Sans" fill="#3a3a3a">7</text><rect x="12.3" y="646.4" width="1.6" height="1.5" fill="#444"/><rect x="11" y="657.9" width="5" height="1.2" fill="#444"/><rect x="12.3" y="669.0" width="1.6" height="1.5" fill="#444"/><text transform="translate(16 681.1) rotate(-90)" text-anchor="middle" font-size="10.5" font-family="Liberation Sans" fill="#3a3a3a">8</text><rect x="12.3" y="691.6" width="1.6" height="1.5" fill="#444"/><rect x="11" y="703.2" width="5" height="1.2" fill="#444"/><rect x="12.3" y="714.3" width="1.6" height="1.5" fill="#444"/><text transform="translate(16 726.3) rotate(-90)" text-anchor="middle" font-size="10.5" font-family="Liberation Sans" fill="#3a3a3a">9</text><rect x="12.3" y="736.9" width="1.6" height="1.5" fill="#444"/><rect x="11" y="748.5" width="5" height="1.2" fill="#444"/><rect x="12.3" y="759.5" width="1.6" height="1.5" fill="#444"/><text transform="translate(16 771.6) rotate(-90)" text-anchor="middle" font-size="10.5" font-family="Liberation Sans" fill="#3a3a3a">10</text><rect x="12.3" y="782.2" width="1.6" height="1.5" fill="#444"/><rect x="11" y="793.7" width="5" height="1.2" fill="#444"/><rect x="12.3" y="804.8" width="1.6" height="1.5" fill="#444"/><text transform="translate(16 816.9) rotate(-90)" text-anchor="middle" font-size="10.5" font-family="Liberation Sans" fill="#3a3a3a">11</text><rect x="12.3" y="827.4" width="1.6" height="1.5" fill="#444"/><rect x="11" y="839.0" width="5" height="1.2" fill="#444"/><rect x="12.3" y="850.1" width="1.6" height="1.5" fill="#444"/><text transform="translate(16 862.1) rotate(-90)" text-anchor="middle" font-size="10.5" font-family="Liberation Sans" fill="#3a3a3a">12</text><rect x="12.3" y="872.7" width="1.6" height="1.5" fill="#444"/><rect x="11" y="884.3" width="5" height="1.2" fill="#444"/><rect x="12.3" y="895.3" width="1.6" height="1.5" fill="#444"/><text transform="translate(16 907.4) rotate(-90)" text-anchor="middle" font-size="10.5" font-family="Liberation Sans" fill="#3a3a3a">13</text><rect x="12.3" y="918.0" width="1.6" height="1.5" fill="#444"/></svg>
<svg style="position:absolute;left:0px;top:0px;" width="1650" height="952" viewBox="0 0 1650 952">
<rect x="475.5" y="318.5" width="285" height="268" fill="none" stroke="#8c8c8c" stroke-width="1"/>
<path d="M617.5,294.5 V313" stroke="#8c8c8c" stroke-width="1"/>

<path stroke="#111" stroke-width="2.6" fill="none" stroke-linecap="round" stroke-linejoin="round" d="M583.6,357 C580.5,350 584,338.8 596,338.3 C602,338.2 605.5,342 606.8,345.6 C614,343.6 623,343.5 630.4,345.6 C633,341 637,337.4 641.5,337.7 C651,338.2 655.5,346 653.2,356 C659.5,361.5 662.5,369 661.6,378 C660,393 642,403.3 618.8,403.3 C595,403.3 576.5,393 575.3,377 C574.8,368.5 578,361.5 583.6,357 Z" fill="#fff"/>
<path stroke="#111" stroke-width="1.7" stroke-linecap="round" d="M603.6,357.3 L609.8,356.6 M628.4,356.4 Q631,355.6 633,356.9 M615.3,376.6 L621.9,376.4"/>
<circle cx="606" cy="365" r="2.5" fill="#111"/><circle cx="631.5" cy="365" r="2.5" fill="#111"/>
<circle cx="618.3" cy="369.3" r="1.7" fill="none" stroke="#111" stroke-width="1.3"/>
<path stroke="#111" stroke-width="2.6" fill="none" stroke-linecap="round" stroke-linejoin="round" d="M596.5,400.5 C590,403 584.5,410 583.3,420 C581.5,435 580.5,450 580.6,462 C580.6,470 580.8,478 581.2,483 C582,489 585,492 592,493.9
 C593,500 593,507 592.7,511.2 C592,520 587.5,528 587.5,534.3 C587.5,545 589.5,553 588.7,559.7 C588,563 587,566 585.8,567.8 C582,571 576,573.5 575.4,577.5 C575.5,581 577,582.5 579,582.2 C585,582 590,579 593.9,578.2 C598,577.5 603,576 604.3,572.4
 C605.5,567 604.5,560 604.9,555.1 C605.5,545 606,536 607.7,528.5 C610,515 614,503 618.1,493.9
 C622,503 627,515 629.7,526.2 C631.5,535 633.5,545 634.3,555.1 C635,562 635,567 636,571.3 C638,575 642,577 645.9,578.2 C649,580 652,582.5 655.1,582.2 C659,582 661.5,580 660.9,577 C659,572 652,567 650.5,560.9
 C649,552 649.5,540 648.2,529.7 C647.5,523 645.5,519 645.3,514.7 C645,508 645.5,500 646.1,493.9
 C652,491 655,487 655.6,482 C657,470 657.5,460 657.3,450 C657.3,445 656,440 655.5,433.6 C655,425 654.5,419 653.8,419 C652,410 647,403 641.7,400.5"/>
<path stroke="#111" stroke-width="1.5" fill="none" stroke-linecap="round" d="M593.8,417 C595.5,423 597,430 597.6,437"/>
<path stroke="#111" stroke-width="1.8" fill="#111" d="M597.6,433 C598.8,448 596,466 592.2,480 C590.6,468 592.5,450 597.6,433 Z"/><path stroke="#ddd" stroke-width="0.7" fill="none" d="M596.2,443 C595.5,455 594,465 592.8,472"/>
<path stroke="#111" stroke-width="1.3" fill="none" d="M592.2,480 C592.5,484 594,487 592.8,490 M590.3,486 L590.8,491.5"/>
<path stroke="#111" stroke-width="1.5" fill="none" stroke-linecap="round" d="M644.8,413.5 C643,420 641.5,427 641,435"/>
<path stroke="#111" stroke-width="1.8" fill="#111" d="M641,431 C639.8,448 642,466 645.8,480 C647.4,468 645.5,450 641,431 Z"/><path stroke="#ddd" stroke-width="0.7" fill="none" d="M642.5,441 C643,455 644,465 645.2,472"/>
<path stroke="#111" stroke-width="1.3" fill="none" d="M645.8,480 C645.5,484 644,487 645.2,490 M647.5,486 L647.2,491.5"/>
<circle cx="475.5" cy="318.5" r="4.7" fill="#fff" stroke="#8c8c8c" stroke-width="1.3"/><circle cx="617.5" cy="318.5" r="4.7" fill="#fff" stroke="#8c8c8c" stroke-width="1.3"/><circle cx="760.5" cy="318.5" r="4.7" fill="#fff" stroke="#8c8c8c" stroke-width="1.3"/><circle cx="475.5" cy="452.5" r="4.7" fill="#fff" stroke="#8c8c8c" stroke-width="1.3"/><circle cx="760.5" cy="452.5" r="4.7" fill="#fff" stroke="#8c8c8c" stroke-width="1.3"/><circle cx="475.5" cy="586.5" r="4.7" fill="#fff" stroke="#8c8c8c" stroke-width="1.3"/><circle cx="617.5" cy="586.5" r="4.7" fill="#fff" stroke="#8c8c8c" stroke-width="1.3"/><circle cx="760.5" cy="586.5" r="4.7" fill="#fff" stroke="#8c8c8c" stroke-width="1.3"/><path d="M627.7,282.4 A9.6,9.6 0 1 0 623.4,292.3 L620.9,289.4 A5.7,5.7 0 1 1 623.9,282.4 L618.6,282.4 L625.6,289.4 L632.8,282.4 Z" fill="#fff" stroke="#8c8c8c" stroke-width="1.3" stroke-linejoin="miter"/></svg>
<div style="position:absolute;left:476px;top:557px;width:42px;height:30px;background:#737373;"></div>
<div style="position:absolute;left:475px;top:557px;width:1.5px;height:30px;background:#999;"></div>
<div style="position:absolute;left:476px;top:585.5px;width:42px;height:1.5px;background:#999;"></div>
<div style="position:absolute;left:491px;top:563px;width:5px;height:19px;border:1px solid #fff;box-sizing:border-box;"></div>
<div style="position:absolute;left:498.5px;top:563px;width:5px;height:19px;border:1px solid #fff;box-sizing:border-box;"></div>
<svg style="position:absolute;left:0;top:0" width="1650" height="952"><circle cx="475.5" cy="586.5" r="4.7" fill="#fff" stroke="#8c8c8c" stroke-width="1.3"/></svg>
<div style="position:absolute;left:773px;top:318px;width:28px;height:26px;background:#fff;border:1px solid #b8b8b8;box-sizing:border-box;"></div>
<svg style="position:absolute;left:776px;top:322px;" width="22" height="18" viewBox="0 0 22 18"><path d="M0.5 1H22 M0.5 5H4 M18.5 5H22 M0.5 9H4 M18.5 9H22 M0.5 13H22" stroke="#1e8ae6" stroke-width="1"/><path d="M6.5 12.5V11A4.8 4.8 0 0 1 16 11V12.5" fill="none" stroke="#222" stroke-width="2.6"/></svg>
<div style="position:absolute;left:670px;top:342px;width:144px;height:63px;background:#fff;border:1px solid #d6d6d6;border-radius:5px;box-sizing:border-box;box-shadow:0 6px 12px rgba(0,0,0,0.14);"></div>
<div style="position:absolute;left:689px;top:352px;width:5px;height:18px;border:1.2px solid #1e8ae6;box-sizing:border-box;"></div>
<div style="position:absolute;left:695px;top:352px;width:5px;height:18px;border:1.2px solid #1e8ae6;box-sizing:border-box;"></div>
<div class="t" style="left:677.90px;top:381.00px;font-size:11.5px;color:#262626;letter-spacing:-0.528px;">Pausar</div>
<svg style="position:absolute;left:726px;top:351px;" width="32" height="23" viewBox="0 0 32 23"><path d="M22.4 5V1.3H0.6V18.5H4.5 M22.4 11.8V18.5H15.5" fill="none" stroke="#333" stroke-width="1.1"/><path d="M1.3 12.4L6.9 7.4L12.4 12.7" fill="none" stroke="#333" stroke-width="1"/><circle cx="16.3" cy="5.9" r="1.4" fill="#333"/><path d="M22.6 6.6L24.2 8L15.6 16.6L13.6 15Z" fill="#fff" stroke="#333" stroke-width="0.9"/><path d="M13.6 15Q10.2 15 9.2 17.4Q7.4 19.8 4.5 20.6Q9.5 22 13 19.8Q15.3 18.3 15.6 16.6Z" fill="#8ec0ee" stroke="#1e6ec6" stroke-width="0.9"/><path d="M25.4 9.3L28.1 11.6L30.8 9.3" fill="none" stroke="#333" stroke-width="1.2"/></svg>
<div class="t" style="left:724.00px;top:381.00px;font-size:11.5px;color:#262626;letter-spacing:-0.224px;">Estilo</div>
<svg style="position:absolute;left:773px;top:350px;" width="24" height="23" viewBox="0 0 24 23"><path d="M0.4 4.5H18.1V21.7 M5 0.1V17.3H22.7" fill="none" stroke="#444" stroke-width="1.1"/><path d="M5 17.3L20.5 2.3" stroke="#333" stroke-width="1.1"/></svg>
<div class="t" style="left:763.00px;top:381.00px;font-size:11.5px;color:#262626;letter-spacing:-0.214px;">Recortar</div>
<div style="position:absolute;left:760px;top:405px;width:1px;height:15px;background:#8c8c8c;"></div>
<div style="position:absolute;left:670px;top:420px;width:191px;height:476px;background:#fff;border:1px solid #d9d9d9;border-radius:5px;box-sizing:border-box;box-shadow:0 9px 12px -3px rgba(0,0,0,0.2);"></div>
<svg style="position:absolute;left:686px;top:427px;" width="11" height="16" viewBox="0 0 11 16"><path d="M2 0.5L8.5 11 M9 0.5L2.5 11" stroke="#333" stroke-width="1" fill="none"/><circle cx="2.4" cy="13" r="1.7" fill="none" stroke="#1e8ae6" stroke-width="1.3"/><circle cx="8.6" cy="13" r="1.7" fill="none" stroke="#1e8ae6" stroke-width="1.3"/></svg>
<div class="t" style="left:709.30px;top:430.00px;font-size:12px;color:#262626;letter-spacing:-0.168px;">Cor<span style="text-decoration:underline;text-underline-offset:1.5px;">t</span>ar</div>
<svg style="position:absolute;left:683px;top:454px;" width="17" height="17" viewBox="0 0 17 17"><path d="M6.5 11.5H0.5V0.5H6L7.5 2" fill="none" stroke="#333" stroke-width="1"/><path d="M6.5 3.5H12L15.5 7V15.5H6.5Z M12 3.5V7H15.5 M9 10H13 M9 12.5H13" fill="#fff" stroke="#333" stroke-width="1"/></svg>
<div class="t" style="left:709.30px;top:458.00px;font-size:12px;color:#262626;letter-spacing:-0.190px;"><span style="text-decoration:underline;text-underline-offset:1.5px;">C</span>opiar</div>
<svg style="position:absolute;left:685px;top:483px;" width="16" height="17" viewBox="0 0 16 17"><path d="M0.8 3.5V15.8H6" fill="none" stroke="#e8720c" stroke-width="1.2"/><path d="M3 3.5V1.5H5.5Q6 0.3 7 0.3Q8 0.3 8.5 1.5H11V3.5Z" fill="#fff" stroke="#444" stroke-width="1"/><path d="M11 3.5H12V6" fill="none" stroke="#444" stroke-width="1"/><rect x="7" y="7.5" width="7.5" height="9" fill="#fff" stroke="#333" stroke-width="1"/></svg>
<div class="t" style="left:709.70px;top:488.00px;font-size:12px;color:#262626;font-weight:700;-webkit-text-stroke:0;letter-spacing:-0.385px;">Opciones de pegado:</div>
<svg style="position:absolute;left:710px;top:512px;" width="22" height="23" viewBox="0 0 22 23"><path d="M1 4.5V20.5H8" fill="none" stroke="#e8720c" stroke-width="1.3"/><path d="M4 4.5V2.5H7.5Q8.3 0.5 10 0.5Q11.7 0.5 12.5 2.5H16V4.5Z" fill="#fff" stroke="#444" stroke-width="1"/><path d="M16 4.5H17V9" fill="none" stroke="#444" stroke-width="1"/><rect x="9.5" y="10.5" width="10" height="12" fill="#fff" stroke="#333" stroke-width="1.1"/></svg>
<div style="position:absolute;left:704px;top:542px;width:156px;height:1px;background:#e1e1e1;"></div>
<div class="t" style="left:709.30px;top:552.00px;font-size:12px;color:#a6a6a6;letter-spacing:0.088px;">Mo<span style="text-decoration:underline;text-underline-offset:1.5px;">d</span>ificar imagen</div>
<svg style="position:absolute;left:683px;top:579px;" width="17" height="15" viewBox="0 0 17 15"><path d="M0.5 0.5H16.5V13.5H7 M0.5 0.5V7" fill="none" stroke="#333" stroke-width="1"/><path d="M4 5L9 10 M9 4L13 8" stroke="#333" stroke-width="0.9"/><circle cx="12" cy="3.5" r="1.1" fill="#333"/><path d="M2.5 7Q0.5 9 2 12.5H6 M4.5 10.5L6.5 12.5L4.5 14.5" fill="none" stroke="#1e8ae6" stroke-width="1.2"/></svg>
<div class="t" style="left:709.30px;top:580.00px;font-size:12px;color:#262626;letter-spacing:-0.088px;">Cambiar imag<span style="text-decoration:underline;text-underline-offset:1.5px;">e</span>n</div>
<svg style="position:absolute;left:845.5px;top:581.0px;" width="7" height="8" viewBox="0 0 7 8"><path d="M0.8 0.6L5.8 4L0.8 7.4" fill="none" stroke="#444" stroke-width="1.3"/></svg>
<div style="position:absolute;left:704px;top:601px;width:156px;height:1px;background:#e1e1e1;"></div>
<svg style="position:absolute;left:683px;top:608px;" width="17" height="16" viewBox="0 0 17 16"><rect x="1" y="1" width="15" height="14" fill="none" stroke="#b5b5b5" stroke-width="1.1" stroke-dasharray="1.3 2.2"/><rect x="4.5" y="4" width="7" height="6.5" fill="none" stroke="#b5b5b5" stroke-width="1"/><rect x="6.5" y="6" width="7" height="6.5" fill="#e6e6e6" stroke="#b5b5b5" stroke-width="1"/></svg>
<div class="t" style="left:708.70px;top:611.00px;font-size:12px;color:#a6a6a6;letter-spacing:-0.065px;">A<span style="text-decoration:underline;text-underline-offset:1.5px;">g</span>rupar</div>
<svg style="position:absolute;left:845.5px;top:612.0px;" width="7" height="8" viewBox="0 0 7 8"><path d="M0.8 0.6L5.8 4L0.8 7.4" fill="none" stroke="#444" stroke-width="1.3"/></svg>
<svg style="position:absolute;left:683px;top:636px;" width="17" height="16" viewBox="0 0 17 16"><path d="M0.5 6V0.5H6" fill="none" stroke="#b5b5b5" stroke-width="1"/><rect x="3" y="3" width="9.5" height="9.5" fill="#e0e0e0" stroke="#b5b5b5" stroke-width="1"/><path d="M16 10V15.5H10.5" fill="none" stroke="#b5b5b5" stroke-width="1"/></svg>
<div class="t" style="left:708.70px;top:639.00px;font-size:12px;color:#a6a6a6;letter-spacing:-0.330px;"><span style="text-decoration:underline;text-underline-offset:1.5px;">T</span>raer al frente</div>
<div style="position:absolute;left:836px;top:638px;width:1px;height:12px;background:#e3e3e3;"></div>
<svg style="position:absolute;left:845.5px;top:641.2px;" width="7" height="8" viewBox="0 0 7 8"><path d="M0.8 0.6L5.8 4L0.8 7.4" fill="none" stroke="#444" stroke-width="1.3"/></svg>
<svg style="position:absolute;left:683px;top:664px;" width="17" height="16" viewBox="0 0 17 16"><rect x="0.5" y="0.5" width="6" height="6" fill="#fff" stroke="#b5b5b5" stroke-width="1"/><rect x="9.5" y="9" width="6.5" height="6.5" fill="#fff" stroke="#b5b5b5" stroke-width="1"/><path d="M3 7V12H9.5 M7 3.5H12.5V9" fill="none" stroke="#b5b5b5" stroke-width="1"/></svg>
<div class="t" style="left:708.70px;top:666.00px;font-size:12px;color:#a6a6a6;letter-spacing:-0.125px;">Enviar al<span style="text-decoration:underline;text-underline-offset:1.5px;"> </span>fondo</div>
<div style="position:absolute;left:836px;top:666px;width:1px;height:12px;background:#e3e3e3;"></div>
<svg style="position:absolute;left:845.5px;top:668.8000000000001px;" width="7" height="8" viewBox="0 0 7 8"><path d="M0.8 0.6L5.8 4L0.8 7.4" fill="none" stroke="#444" stroke-width="1.3"/></svg>
<div style="position:absolute;left:704px;top:688px;width:156px;height:1px;background:#e1e1e1;"></div>
<svg style="position:absolute;left:683px;top:697px;" width="18" height="13" viewBox="0 0 18 13"><rect x="0.6" y="0.8" width="10.5" height="7" rx="3.5" fill="none" stroke="#333" stroke-width="1.1"/><rect x="5.8" y="4.2" width="10.5" height="7" rx="3.5" fill="none" stroke="#fff" stroke-width="2.6"/><rect x="5.8" y="4.2" width="10.5" height="7" rx="3.5" fill="none" stroke="#333" stroke-width="1.1"/><path d="M9.5 0.8Q11.2 0.8 11.1 4.3" fill="none" stroke="#333" stroke-width="1.1"/></svg>
<div class="t" style="left:708.70px;top:698.00px;font-size:12px;color:#262626;letter-spacing:-0.038px;"><span style="text-decoration:underline;text-underline-offset:1.5px;">V</span>ínculo</div>
<div style="position:absolute;left:704px;top:719px;width:156px;height:1px;background:#e1e1e1;"></div>
<div class="t" style="left:708.70px;top:729.00px;font-size:12px;color:#262626;letter-spacing:-0.090px;">Guar<span style="text-decoration:underline;text-underline-offset:1.5px;">d</span>ar como imagen...</div>
<div style="position:absolute;left:704px;top:750px;width:156px;height:1px;background:#e1e1e1;"></div>
<svg style="position:absolute;left:683px;top:757px;" width="17" height="16" viewBox="0 0 17 16"><rect x="0.5" y="0.5" width="15.5" height="11.5" fill="#fff" stroke="#333" stroke-width="1"/><path d="M1 11.5V8L5 4.5L9.5 8.5L12 7L15.5 10V11.5Z" fill="#8bbbe8" stroke="#1e6ec6" stroke-width="0.9"/><circle cx="12.5" cy="3.5" r="1.2" fill="#e8720c"/><path d="M0 14.8H6 M8 14.8H16.5" stroke="#e81123" stroke-width="1.1"/></svg>
<div class="t" style="left:708.80px;top:760.00px;font-size:12px;color:#262626;letter-spacing:-0.079px;">Insertar tít<span style="text-decoration:underline;text-underline-offset:1.5px;">u</span>lo...</div>
<svg style="position:absolute;left:683px;top:786px;" width="17" height="14" viewBox="0 0 17 14"><path d="M0 0.5H16.5 M0 4.5H3.5 M13 4.5H16.5 M0 8.5H3.5 M13 8.5H16.5 M0 12.5H16.5" stroke="#1e8ae6" stroke-width="1"/><path d="M5.5 9V8A2.8 2.8 0 0 1 11 8V9" fill="none" stroke="#222" stroke-width="1.8"/></svg>
<div class="t" style="left:708.80px;top:788.00px;font-size:12px;color:#262626;letter-spacing:-0.042px;">Aju<span style="text-decoration:underline;text-underline-offset:1.5px;">s</span>tar texto</div>
<svg style="position:absolute;left:845.5px;top:789.2px;" width="7" height="8" viewBox="0 0 7 8"><path d="M0.8 0.6L5.8 4L0.8 7.4" fill="none" stroke="#444" stroke-width="1.3"/></svg>
<div style="position:absolute;left:704px;top:809px;width:156px;height:1px;background:#e1e1e1;"></div>
<div style="position:absolute;left:672px;top:811px;width:188px;height:28px;background:#cacaca;"></div>
<svg style="position:absolute;left:683px;top:817px;" width="18" height="16" viewBox="0 0 18 16"><path d="M6 12.5H0.5V1H16.5V9" fill="none" stroke="#333" stroke-width="1.1"/><path d="M1 8.5L4.5 5.3L8.5 8.5L10 7.5" fill="none" stroke="#333" stroke-width="1"/><circle cx="12.6" cy="4" r="1.2" fill="#333"/><rect x="6.8" y="9.8" width="10" height="5" fill="#fff" stroke="#1e8ae6" stroke-width="1.3"/><path d="M9.5 12.3H14" stroke="#333" stroke-width="1"/></svg>
<div class="t" style="left:708.80px;top:819.00px;font-size:12px;color:#262626;letter-spacing:-0.062px;">Edit<span style="text-decoration:underline;text-underline-offset:1.5px;">a</span>r texto alternativo...</div>
<svg style="position:absolute;left:683px;top:843px;" width="18" height="18" viewBox="0 0 18 18"><path d="M0.3 1.3H16.5 M0.3 13.6H16.5 M0.3 16.5H16.5 M0.3 4.2H4 M0.3 7.1H4 M0.3 10.8H4" stroke="#333" stroke-width="1.1"/><rect x="5.6" y="4.2" width="10.3" height="6.6" fill="#fff" stroke="#1e8ae6" stroke-width="1.2"/><circle cx="5.6" cy="4.2" r="1" fill="#333"/><circle cx="15.9" cy="4.2" r="1" fill="#333"/><circle cx="5.6" cy="10.8" r="1" fill="#333"/><circle cx="15.9" cy="10.8" r="1" fill="#333"/></svg>
<div class="t" style="left:708.80px;top:847.00px;font-size:12px;color:#262626;letter-spacing:-0.037px;">Tamaño y posic<span style="text-decoration:underline;text-underline-offset:1.5px;">i</span>ón...</div>
<svg style="position:absolute;left:682px;top:871px;" width="20" height="18" viewBox="0 0 20 18"><path d="M1.5 7L7.5 1.5L8.5 2.5L9.5 6.5L5.5 10.5Z" fill="#fff" stroke="#333" stroke-width="1.1" stroke-linejoin="round"/><path d="M10.5 5Q12.5 6 13 8" fill="none" stroke="#1e6ec6" stroke-width="1.6"/><path d="M17 7.5L18 8.5L10 15L9 14Z" fill="#fff" stroke="#333" stroke-width="1"/><path d="M9 14Q5.5 14.5 4.5 16.8Q8 17.3 10 15Z" fill="#1e6ec6" stroke="#1e6ec6" stroke-width="0.8"/></svg>
<div class="t" style="left:708.80px;top:875.00px;font-size:12px;color:#262626;letter-spacing:-0.072px;">Formato de <span style="text-decoration:underline;text-underline-offset:1.5px;">i</span>magen...</div>
<svg style="position:absolute;left:610px;top:798px;" width="60" height="45" viewBox="0 0 60 45"><path d="M2.2 11.2H29.5V1.8L56.2 21.8L29.5 41.6V32.6H2.2Z" fill="#fc4747" stroke="#454545" stroke-width="2.1" stroke-linejoin="round"/></svg>
<div class="t" style="left:8.20px;top:935.00px;font-size:12px;color:#444444;letter-spacing:-0.506px;">Página 1 de 1</div>
<div class="t" style="left:96.80px;top:935.00px;font-size:12px;color:#444444;letter-spacing:-0.382px;">0 palabras</div>
<svg style="position:absolute;left:169px;top:934px;" width="15" height="13" viewBox="0 0 15 13"><path d="M0.5 0.5H5Q6.5 0.5 6.5 2V12Q6.5 10.5 5 10.5H0.5Z M12.5 0.5H8Q6.5 0.5 6.5 2V12" fill="none" stroke="#444" stroke-width="1"/><path d="M8 9.5L10 11.5L14 7" fill="none" stroke="#444" stroke-width="1.1"/></svg>
<div class="t" style="left:200.90px;top:935.00px;font-size:12px;color:#444444;letter-spacing:-0.382px;">Español (Colombia)</div>
<svg style="position:absolute;left:319px;top:934px;" width="15" height="14" viewBox="0 0 15 14"><path d="M0.5 0.5H13.5 M0.5 2.5H13.5 M0.5 0.5V12.5H6 M13.5 0.5V6 M2.5 5H8 M2.5 7.5H6 M2.5 10H5" fill="none" stroke="#444" stroke-width="1"/><circle cx="10.5" cy="10" r="3.6" fill="none" stroke="#444" stroke-width="1"/><circle cx="10.5" cy="10" r="1.7" fill="#444"/></svg>
<svg style="position:absolute;left:1233px;top:933px;" width="16" height="14" viewBox="0 0 16 14"><path d="M0.5 3V0.5H3 M13 0.5H15.5V3 M15.5 11V13.5H13 M3 13.5H0.5V11" fill="none" stroke="#444" stroke-width="1"/><path d="M4.5 2.5H9L11.5 5V11.5H4.5Z M9 2.5V5H11.5" fill="none" stroke="#444" stroke-width="1"/></svg>
<div class="t" style="left:1251.80px;top:935.00px;font-size:12px;color:#444444;letter-spacing:-0.307px;">Concentración</div>
<svg style="position:absolute;left:1350px;top:933px;" width="14" height="12" viewBox="0 0 14 12"><path d="M0.5 0.5H6.5V11.5H0.5Z M7 0.5H13V11.5H7Z M2 3H5 M2 5.5H5 M2 8H5 M8.5 3H11.5 M8.5 5.5H11.5 M8.5 8H11.5" fill="none" stroke="#444" stroke-width="1"/></svg>
<div style="position:absolute;left:1378px;top:930px;width:40px;height:21px;background:#c8c6c4;"></div>
<svg style="position:absolute;left:1392px;top:933px;" width="12" height="14" viewBox="0 0 12 14"><path d="M0.5 0.5H11V13H0.5Z M2.5 3H9 M2.5 5.5H9 M2.5 8H9 M2.5 10.5H9" fill="none" stroke="#333" stroke-width="1"/></svg>
<svg style="position:absolute;left:1430px;top:933px;" width="16" height="15" viewBox="0 0 16 15"><path d="M0.5 0.5H11.5V6 M0.5 0.5V12.5H6 M0.5 2.5H11.5 M2.5 5H9 M2.5 7.5H6 M2.5 10H5" fill="none" stroke="#444" stroke-width="1"/><circle cx="11" cy="10.5" r="4" fill="#fff" stroke="#444" stroke-width="1"/><path d="M7 10.5H15 M11 6.5V14.5" stroke="#444" stroke-width="0.8"/><ellipse cx="11" cy="10.5" rx="1.8" ry="4" fill="none" stroke="#444" stroke-width="0.8"/></svg>
<div style="position:absolute;left:1464px;top:939px;width:9px;height:1px;background:#444;"></div>
<div style="position:absolute;left:1477px;top:939px;width:100px;height:1px;background:#a0a0a0;"></div>
<div style="position:absolute;left:1527px;top:934px;width:5px;height:12px;background:#5f5f5f;"></div>
<div style="position:absolute;left:1582px;top:939px;width:8px;height:1px;background:#444;"></div>
<div style="position:absolute;left:1585.5px;top:935px;width:1px;height:9px;background:#444;"></div>
<div style="position:absolute;left:1593.5px;top:898.8px;width:50px;height:50px;border-radius:50%;background:rgba(255,255,255,0.55);box-shadow:0 0 2px rgba(200,210,230,0.6);"></div>
<svg style="position:absolute;left:1580px;top:880px;" width="70" height="72" viewBox="0 0 70 72"><path d="M39.5 52.5Q35 47 29 45.5Q22 44 22.5 35Q23 24 32 22.5Q44 20 50.5 27Q53 32 50.5 39Q47 46 47.5 52Q40 55 42 60.5Q48 62 52.5 58Q55 56 51 56.5Q45 58 42.5 62.5" fill="none" stroke="#6a8dca" stroke-width="1.8" stroke-linecap="round"/></svg>
<div class="t" style="left:1603.00px;top:936.00px;font-size:11px;color:#5a5a5a;letter-spacing:-0.911px;">120%</div>
<svg style="position:absolute;left:0;top:0" width="1650" height="952">
<path d="M0,0 H6 A6,6 0 0 0 0,6 Z" fill="#a9b6c9"/>
<path d="M1650,0 H1642 A8,8 0 0 1 1650,8 Z" fill="#a9b6c9"/>
<path d="M0,952 V944 A8,8 0 0 0 8,952 Z" fill="#a0afc6"/>
<path d="M0.8,943.5 A8,8 0 0 0 8.5,951.2" fill="none" stroke="#2b579a" stroke-width="1.6"/>
<path d="M1650,952 V944 A8,8 0 0 1 1642,952 Z" fill="#a0afc6"/>
<path d="M1649.2,943.5 A8,8 0 0 1 1641.5,951.2" fill="none" stroke="#2b579a" stroke-width="1.6"/>
</svg>
</body></html>
